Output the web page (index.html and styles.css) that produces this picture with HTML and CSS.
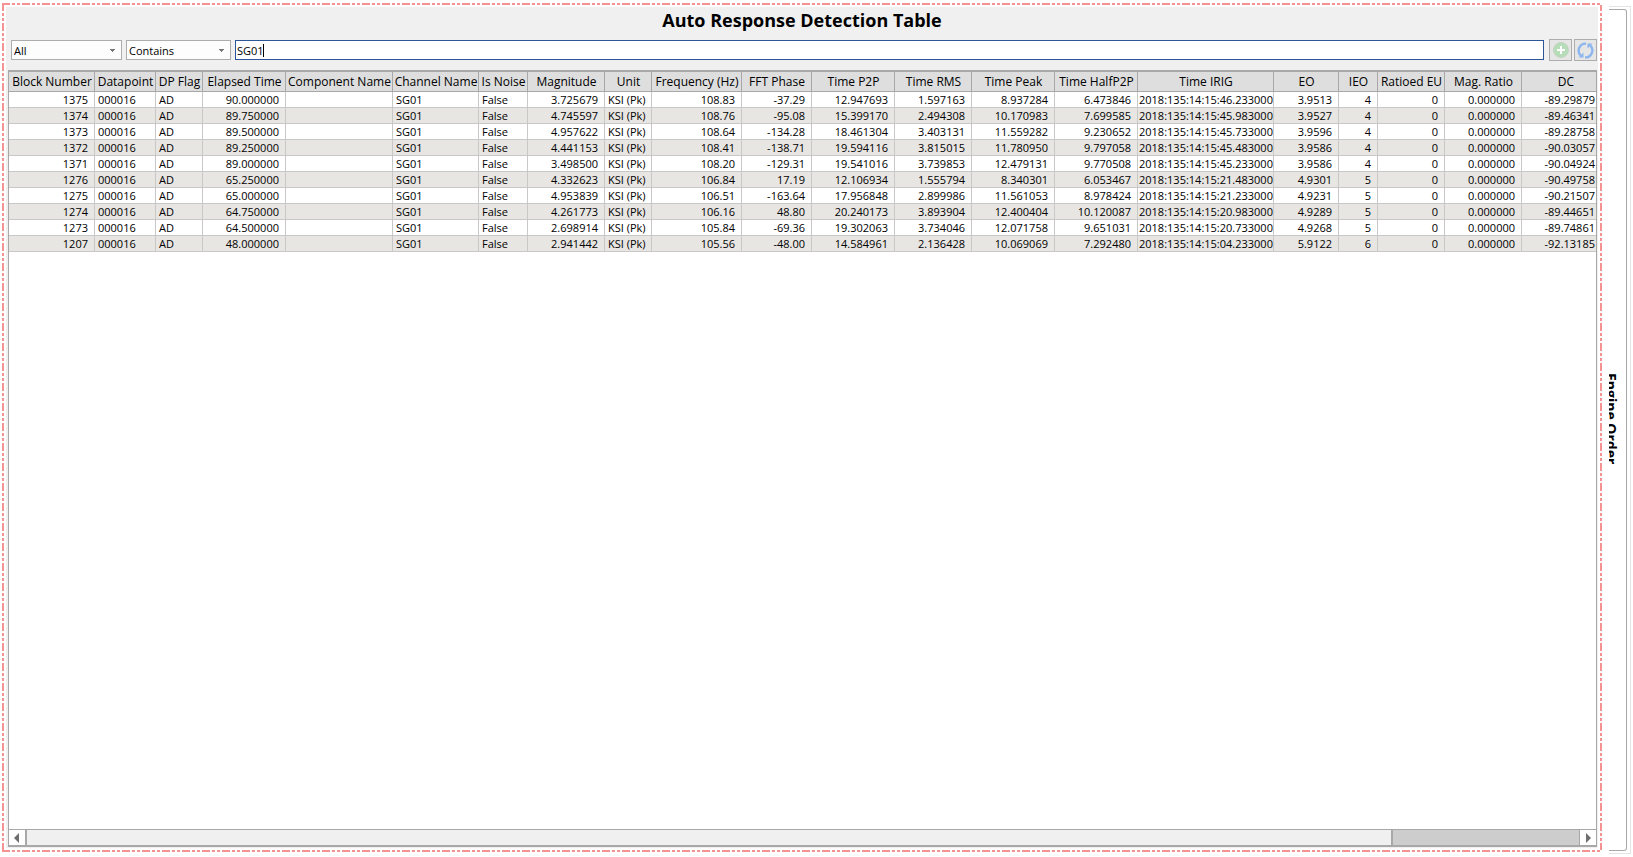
FILE: index.html
```html
<!DOCTYPE html>
<html lang="en">
<head>
<meta charset="utf-8">
<title>Auto Response Detection Table</title>
<link rel="stylesheet" href="styles.css">
</head>
<body>
<main class="panel">
  <h1 class="title">Auto Response Detection Table</h1>
  <form class="filters">
    <select class="field column-select" aria-label="Column"><option>All</option></select>
    <select class="field match-select" aria-label="Match"><option>Contains</option></select>
    <div class="search"><input class="field search-input" type="text" aria-label="Filter text" value="SG01"><span class="caret"></span></div>
    <div class="tools">
      <button class="tool" type="button" aria-label="Add filter"><svg width="16" height="16" viewBox="0 0 16 16"><circle cx="8" cy="8" r="7.5" fill="#b4ddb8" stroke="#c4d2c4"/><path d="M8 4v8M4 8h8" stroke="#fff" stroke-width="2"/></svg></button>
      <button class="tool" type="button" aria-label="Refresh"><svg width="17" height="17" viewBox="0 0 17 17"><g fill="none" stroke="#8db6ee" stroke-width="2.400"><path d="M9 1.600A7 7 0 0 0 3.800 13.600"/><path d="M8 15.400A7 7 0 0 0 13.200 3.400"/></g><path d="M1.500 15.500h5v-5zM15.500 1.500h-5v5z" fill="#8db6ee"/></svg></button>
    </div>
  </form>
  <section class="grid">
    <div class="viewport">
      <table class="data">
        <colgroup id="cols"></colgroup>
        <thead><tr id="head"></tr></thead>
        <tbody id="rows"></tbody>
      </table>
    </div>
    <div class="scrollbar">
      <button class="arrow" type="button" aria-label="Scroll left"><svg width="6" height="10" viewBox="0 0 6 10"><path d="M5 0v10L0 5z" fill="#6e6e6e"/></svg></button>
      <div class="track"><div class="thumb"></div></div>
      <button class="arrow arrow-right" type="button" aria-label="Scroll right"><svg width="6" height="10" viewBox="0 0 6 10"><path d="M1 0v10L6 5z" fill="#6e6e6e"/></svg></button>
    </div>
  </section>
</main>
<aside class="side"><div class="side-inner"><span class="side-label">Engine Order</span></div></aside>
<script src="table.js"></script>
</body>
</html>
```
FILE: styles.css
```css
* { box-sizing: border-box; }
html, body { height: 100%; }
body {
  margin: 0;
  display: flex;
  gap: 7px;
  padding: 3px 2px;
  background: #fff;
  color: #000;
  font-family: "Open Sans", "Noto Sans", sans-serif;
  font-size: 12px;
}
.panel {
  --h: repeating-linear-gradient(90deg, #f59393 0 8px, #fff 8px 10px, #f59393 10px 13px, #fff 13px 15px, #f59393 15px 18px, #fff 18px 20px);
  --v: repeating-linear-gradient(180deg, #f59393 0 8px, #fff 8px 10px, #f59393 10px 13px, #fff 13px 15px, #f59393 15px 18px, #fff 18px 20px);
  flex: 1;
  min-width: 0;
  display: flex;
  flex-direction: column;
  height: calc(100% - 2px);
  padding: 4px;
  background:
    var(--h) top / 100% 2px no-repeat,
    var(--h) bottom / 100% 2px no-repeat,
    var(--v) left / 2px 100% no-repeat,
    var(--v) right / 2px 100% no-repeat,
    linear-gradient(#f0f0f0, #f0f0f0) center / calc(100% - 8px) calc(100% - 8px) no-repeat;
}
.title {
  margin: 0;
  height: 32px;
  line-height: 27px;
  text-align: center;
  font-size: 18px;
  font-weight: 700;
}
.filters {
  display: flex;
  align-items: center;
  height: 22px;
  gap: 4px;
  padding: 0 1px 0 5px;
}
.field {
  height: 20px;
  margin: 0;
  border: 1px solid #adadad;
  border-radius: 0;
  outline: 0;
  background: #fdfdfd;
  color: #000;
  font-family: "Open Sans", "Noto Sans", sans-serif;
  font-size: 11px;
}
select.field {
  appearance: none;
  padding: 0 2px;
  background: linear-gradient(#777, #777) right 6px top 8px / 5px 1px no-repeat, linear-gradient(#777, #777) right 7px top 9px / 3px 1px no-repeat, linear-gradient(#777, #777) right 8px top 10px / 1px 1px no-repeat, #fdfdfd;
}
.column-select { width: 111px; }
.match-select { width: 105px; }
.search { position: relative; flex: 1; display: flex; }
.search-input { width: 100%; padding: 0 1px; border-color: #2b579a; background: #fff; }
.caret {
  position: absolute;
  top: 4px;
  left: 28px;
  width: 1px;
  height: 13px;
  background: #000;
}
.tools { display: flex; gap: 2px; padding-left: 1px; }
.tool {
  width: 23px;
  height: 22px;
  padding: 0;
  display: grid;
  place-items: center;
  border: 1px solid #adadad;
  background: #e6e6e6;
}
.grid {
  flex: 1;
  min-height: 0;
  display: flex;
  flex-direction: column;
  margin: 9px 1px 1px 2px;
  border: 1px solid #a8a8a8;
  border-width: 2px 1px;
  background: #fff;
}
.viewport { flex: 1; min-height: 0; overflow: hidden; }
.data {
  table-layout: fixed;
  border-collapse: separate;
  border-spacing: 0;
}
.data th {
  height: 20px;
  padding: 0 0 0 1px;
  border: 1px solid #a8a8a8;
  border-width: 0 1px 1px 0;
  background: #dedede;
  font-weight: 400;
  line-height: 19px;
  white-space: nowrap;
}
.data td {
  height: 16px;
  padding: 0 6px 0 3px;
  border: 1px solid #c8c8c8;
  border-width: 0 1px 1px 0;
  font-size: 11px;
  line-height: 15px;
  text-align: right;
  white-space: nowrap;
}
.data .text { padding-right: 0; text-align: left; }
.data .stamp { padding: 0 1px; text-align: left; }
.data .last { padding-right: 14px; }
.data tr:nth-child(even) td { background: #e8e6e3; }
.scrollbar {
  display: flex;
  height: 16px;
  border-top: 1px solid #a8a8a8;
  background: #fff;
}
.arrow {
  width: 17px;
  padding: 0;
  display: grid;
  place-items: center;
  border: 0;
  border-right: 1px solid #a8a8a8;
  background: #fff;
}
.arrow-right { border-right: 0; border-left: 1px solid #a8a8a8; }
.track { flex: 1; background: #cdcdcd; }
.thumb {
  width: 88%;
  height: 100%;
  border: 1px solid #a8a8a8;
  border-width: 0 2px 0 1px;
  background: #f0f0f0;
}
.side {
  width: 22px;
  height: calc(100% - 3px);
  margin-top: 3px;
  padding: 2px 3px 2px 0;
  border: 1px solid #e3e3e3;
  border-left: 0;
}
.side-inner {
  height: 100%;
  display: flex;
  align-items: center;
  padding-bottom: 22px;
  border: 1px solid #a8a8a8;
  border-left: 0;
  border-radius: 0 3px 3px 0;
}
.side-label {
  width: 10px;
  overflow: hidden;
  writing-mode: vertical-rl;
  line-height: 16px;
  font-size: 14px;
  font-weight: 700;
}
```
FILE: table.js
```js
const columns = [
  ["Block Number", 86], ["Datapoint", 61, "text"], ["DP Flag", 47, "text"], ["Elapsed Time", 83],
  ["Component Name", 107, "text"], ["Channel Name", 86, "text"], ["Is Noise", 49, "text"], ["Magnitude", 77],
  ["Unit", 47, "text"], ["Frequency (Hz)", 90], ["FFT Phase", 70], ["Time P2P", 83], ["Time RMS", 77],
  ["Time Peak", 83], ["Time HalfP2P", 83], ["Time IRIG", 136, "stamp"], ["EO", 65], ["IEO", 39],
  ["Ratioed EU", 67], ["Mag. Ratio", 77], ["DC", 88, "last"]
];
const data = [
  "1375|90.000000|3.725679|108.83|-37.29|12.947693|1.597163|8.937284|6.473846|46.233000|3.9513|4|-89.29879",
  "1374|89.750000|4.745597|108.76|-95.08|15.399170|2.494308|10.170983|7.699585|45.983000|3.9527|4|-89.46341",
  "1373|89.500000|4.957622|108.64|-134.28|18.461304|3.403131|11.559282|9.230652|45.733000|3.9596|4|-89.28758",
  "1372|89.250000|4.441153|108.41|-138.71|19.594116|3.815015|11.780950|9.797058|45.483000|3.9586|4|-90.03057",
  "1371|89.000000|3.498500|108.20|-129.31|19.541016|3.739853|12.479131|9.770508|45.233000|3.9586|4|-90.04924",
  "1276|65.250000|4.332623|106.84|17.19|12.106934|1.555794|8.340301|6.053467|21.483000|4.9301|5|-90.49758",
  "1275|65.000000|4.953839|106.51|-163.64|17.956848|2.899986|11.561053|8.978424|21.233000|4.9231|5|-90.21507",
  "1274|64.750000|4.261773|106.16|48.80|20.240173|3.893904|12.400404|10.120087|20.983000|4.9289|5|-89.44651",
  "1273|64.500000|2.698914|105.84|-69.36|19.302063|3.734046|12.071758|9.651031|20.733000|4.9268|5|-89.74861",
  "1207|48.000000|2.941442|105.56|-48.00|14.584961|2.136428|10.069069|7.292480|04.233000|5.9122|6|-92.13185"
].map(line => {
  const [block, time, mag, freq, phase, p2p, rms, peak, half, irig, eo, ieo, dc] = line.split("|");
  return [block, "000016", "AD", time, "", "SG01", "False", mag, "KSI (Pk)", freq, phase, p2p, rms, peak, half,
    "2018:135:14:15:" + irig, eo, ieo, "0", "0.000000", dc];
});
document.querySelector(".data").style.width = columns.reduce((sum, c) => sum + c[1], 0) + "px";
document.getElementById("cols").innerHTML = columns.map(c => `<col style="width:${c[1]}px">`).join("");
document.getElementById("head").innerHTML = columns.map(c => `<th scope="col">${c[0]}</th>`).join("");
document.getElementById("rows").innerHTML = data.map(row =>
  `<tr>${row.map((v, i) => `<td class="${columns[i][2] || "num"}">${v}</td>`).join("")}</tr>`).join("");
```
